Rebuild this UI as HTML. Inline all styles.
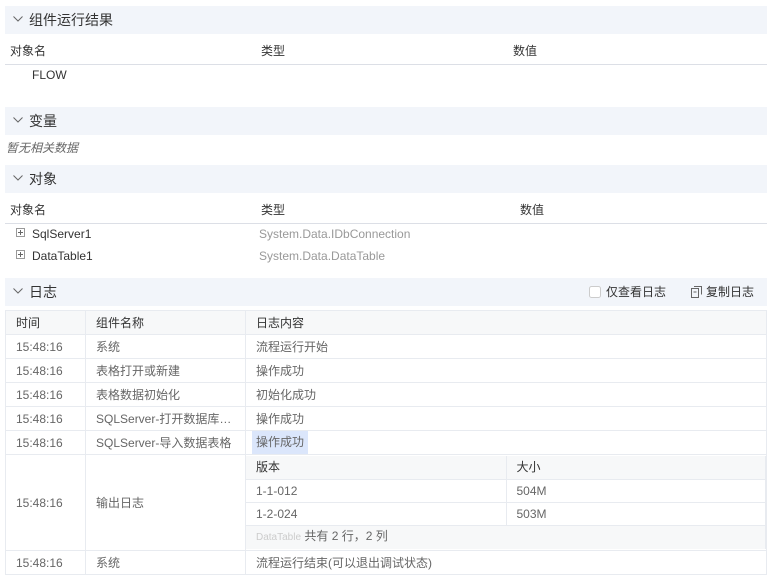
<!DOCTYPE html>
<html><head><meta charset="utf-8"><style>
*{margin:0;padding:0;box-sizing:border-box}
body{width:772px;height:581px;background:#fff;font-family:"Liberation Sans","Noto Sans CJK SC",sans-serif;font-size:12px;color:#333;position:relative;overflow:hidden}
.abs{position:absolute}
.hd{position:absolute;left:5px;width:762px;height:28px;background:#f2f5fa;font-size:14px;line-height:28px;padding-left:24px;color:#333}
.hd svg{position:absolute;left:8px;top:10px}
.th{position:absolute;left:5px;width:762px;height:27px;border-bottom:1px solid #dcdfe6;line-height:26px;color:#333}
.t{position:absolute;white-space:nowrap}
table{border-collapse:collapse;position:absolute;left:5px;top:310px;width:762px;table-layout:fixed}
td{border:1px solid #e8ebf0;height:24px;padding:0 10px;color:#666;white-space:nowrap;overflow:hidden;line-height:16px}
tr.h td{background:#f7f8f9;color:#333}
.in{position:static;width:100%}
.in td{border-left:none;border-right:1px solid #e8ebf0;height:23px}
</style></head><body>
<div class="hd" style="top:6px"><svg width="10" height="6"><path d="M0.5 0.5 L5 5 L9.5 0.5" fill="none" stroke="#666"/></svg>组件运行结果</div>
<div class="th" style="top:38px"><span class="t" style="left:5px">对象名</span><span class="t" style="left:256px">类型</span><span class="t" style="left:508px">数值</span></div>
<div class="t" style="left:32px;top:67px;line-height:16px">FLOW</div>
<div class="hd" style="top:107px"><svg width="10" height="6"><path d="M0.5 0.5 L5 5 L9.5 0.5" fill="none" stroke="#666"/></svg>变量</div>
<div class="t" style="left:6px;top:140px;font-style:italic;color:#666;line-height:16px">暂无相关数据</div>
<div class="hd" style="top:165px"><svg width="10" height="6"><path d="M0.5 0.5 L5 5 L9.5 0.5" fill="none" stroke="#666"/></svg>对象</div>
<div class="th" style="top:197px"><span class="t" style="left:5px">对象名</span><span class="t" style="left:256px">类型</span><span class="t" style="left:515px">数值</span></div>
<svg class="abs" style="left:16px;top:228px" width="10" height="10"><rect x="0.5" y="0.5" width="8" height="8" fill="none" stroke="#999"/><path d="M2 4.5h5M4.5 2v5" stroke="#666"/></svg>
<div class="t" style="left:32px;top:226px;line-height:16px">SqlServer1</div>
<div class="t" style="left:259px;top:226px;line-height:16px;color:#999">System.Data.IDbConnection</div>
<svg class="abs" style="left:16px;top:250px" width="10" height="10"><rect x="0.5" y="0.5" width="8" height="8" fill="none" stroke="#999"/><path d="M2 4.5h5M4.5 2v5" stroke="#666"/></svg>
<div class="t" style="left:32px;top:248px;line-height:16px">DataTable1</div>
<div class="t" style="left:259px;top:248px;line-height:16px;color:#999">System.Data.DataTable</div>
<div class="hd" style="top:278px"><svg width="10" height="6"><path d="M0.5 0.5 L5 5 L9.5 0.5" fill="none" stroke="#666"/></svg>日志
<svg class="abs" style="left:584px;top:8px" width="12" height="12"><rect x="0.5" y="0.5" width="11" height="11" rx="2" fill="#fff" stroke="#ccc"/></svg>
<span class="t" style="left:601px;font-size:12px">仅查看日志</span>
<svg class="abs" style="left:686px;top:8px" width="11" height="12"><rect x="0.5" y="2.5" width="7" height="9" fill="none" stroke="#666"/><path d="M3 0.5h7.5v8" fill="none" stroke="#666"/><path d="M2.5 6h3" stroke="#666"/></svg>
<span class="t" style="left:701px;font-size:12px">复制日志</span></div>
<table>
<colgroup><col style="width:80px"><col style="width:160px"><col></colgroup>
<tr class="h"><td>时间</td><td>组件名称</td><td>日志内容</td></tr>
<tr><td>15:48:16</td><td>系统</td><td>流程运行开始</td></tr>
<tr><td>15:48:16</td><td>表格打开或新建</td><td>操作成功</td></tr>
<tr><td>15:48:16</td><td>表格数据初始化</td><td>初始化成功</td></tr>
<tr><td>15:48:16</td><td>SQLServer-打开数据库…</td><td>操作成功</td></tr>
<tr><td>15:48:16</td><td>SQLServer-导入数据表格</td><td style="padding-left:6px"><span style="background:#dbe6fb;display:inline-block;line-height:23px;padding:0 4px">操作成功</span></td></tr>
<tr><td style="height:96px">15:48:16</td><td>输出日志</td><td style="padding:0">
<table class="in"><colgroup><col style="width:260px"><col></colgroup>
<tr class="h"><td style="border-top:none">版本</td><td style="border-top:none">大小</td></tr>
<tr><td>1-1-012</td><td>504M</td></tr>
<tr><td>1-2-024</td><td>503M</td></tr>
<tr><td colspan="2" style="background:#f7f8f9;border-bottom:none;height:24px;color:#666"><span style="font-size:10px;color:#ccc">DataTable</span> 共有 2 行，2 列</td></tr>
</table></td></tr>
<tr><td>15:48:16</td><td>系统</td><td>流程运行结束(可以退出调试状态)</td></tr>
</table>
</body></html>
